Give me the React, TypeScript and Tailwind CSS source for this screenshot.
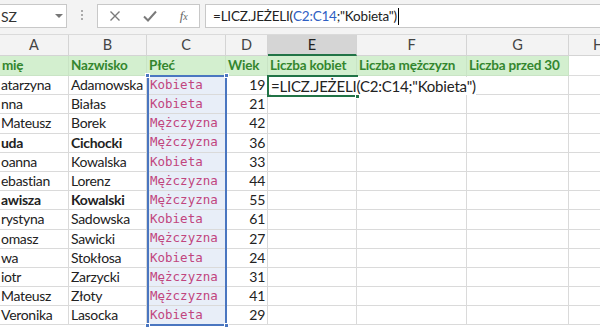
import React from "react";

const cols = [
  { w: 69 },
  { w: 78 },
  { w: 79 },
  { w: 42 },
  { w: 89 },
  { w: 110 },
  { w: 102 },
  { w: 60 },
];

const data: [string, string, string, number, boolean][] = [
  ["atarzyna", "Adamowska", "Kobieta", 19, false],
  ["nna", "Białas", "Kobieta", 21, false],
  ["Mateusz", "Borek", "Mężczyzna", 42, false],
  ["uda", "Cichocki", "Mężczyzna", 36, true],
  ["oanna", "Kowalska", "Kobieta", 33, false],
  ["ebastian", "Lorenz", "Mężczyzna", 44, false],
  ["awisza", "Kowalski", "Mężczyzna", 55, true],
  ["rystyna", "Sadowska", "Kobieta", 61, false],
  ["omasz", "Sawicki", "Mężczyzna", 27, false],
  ["wa", "Stokłosa", "Kobieta", 24, false],
  ["iotr", "Zarzycki", "Mężczyzna", 31, false],
  ["Mateusz", "Złoty", "Mężczyzna", 41, false],
  ["Veronika", "Lasocka", "Kobieta", 29, false],
];

const font = { fontFamily: "Lato, 'Open Sans', sans-serif" };

export default function App() {
  const letters = ["A", "B", "C", "D", "E", "F", "G", "H"];
  const headers = ["mię", "Nazwisko", "Płeć", "Wiek", "Liczba kobiet", "Liczba mężczyzn", "Liczba przed 30", ""];
  return (
    <div className="relative w-[600px] h-[330px] overflow-hidden bg-white text-[#222]" style={font}>
      {/* formula bar */}
      <div className="flex h-[35px] w-[600px] items-start bg-[#f3f3f3] pt-[4px] border-b border-[#dadada]">
        <div className="relative flex h-[24px] w-[67px] shrink-0 items-center border border-l-0 border-[#c8c8c8] bg-white text-[14px] text-[#333]">
          <span className="pl-[1px]">SZ</span>
          <span className="absolute left-[55px] top-[9px] h-0 w-0 border-x-[4px] border-t-[4px] border-x-transparent border-t-[#777]"></span>
        </div>
        <div className="flex w-[30px] shrink-0 flex-col items-center gap-[2px] pt-[6px]">
          <span className="h-[2px] w-[2px] bg-[#aaa]"></span>
          <span className="h-[2px] w-[2px] bg-[#aaa]"></span>
          <span className="h-[2px] w-[2px] bg-[#aaa]"></span>
        </div>
        <div className="flex h-[24px] w-[103px] shrink-0 items-center justify-around border border-[#c8c8c8] bg-white text-[#777]">
          <svg width="12" height="12" viewBox="0 0 12 12">
            <path d="M1.5 1.5 L10.5 10.5 M10.5 1.5 L1.5 10.5" stroke="#7a7a7a" strokeWidth="1.4" />
          </svg>
          <svg width="14" height="12" viewBox="0 0 14 12">
            <path d="M1 6.5 L5 10.5 L13 1.5" stroke="#7a7a7a" strokeWidth="2" fill="none" />
          </svg>
          <span className="text-[13px] italic text-[#666]" style={{ fontFamily: "'Liberation Serif', serif" }}>
            f<span className="text-[10px]">x</span>
          </span>
        </div>
        <div className="ml-[5px] flex h-[24px] flex-1 items-center border border-r-0 border-[#c8c8c8] bg-white pl-[7px] text-[13.5px] tracking-[-0.2px] text-[#222]">
          <span>=LICZ.JEŻELI(</span>
          <span className="text-[#2f5fc4]">C2:C14</span>
          <span>;"Kobieta")</span>
          <span className="ml-[1px] h-[17px] w-[1px] bg-black"></span>
        </div>
      </div>
      {/* column headers */}
      <div className="flex h-[21px] w-[629px] bg-[#f3f3f3] text-[14.5px] text-[#444]">
        {letters.map((l, i) => (
          <div
            key={l}
            className={
              "flex shrink-0 items-center justify-center border-r border-[#d4d4d4] " +
              (l === "E" ? "bg-[#d5d5d5] border-b-2 border-b-[#217346] text-[#222]" : "border-b border-b-[#d4d4d4]")
            }
            style={{ width: cols[i].w }}
          >
            {l}
          </div>
        ))}
      </div>
      {/* header row */}
      <div className="flex h-[20px] w-[629px] text-[13.5px] font-bold tracking-[-0.2px] text-[#33862e]">
        {headers.map((h, i) => (
          <div
            key={i}
            className={
              "flex shrink-0 items-center overflow-visible whitespace-nowrap border-b border-r border-[#c9e4c5] px-[2px] " +
              (i < 7 ? "bg-[#d3efcf]" : "border-[#dcdcdc] bg-white")
            }
            style={{ width: cols[i].w }}
          >
            {h}
          </div>
        ))}
      </div>
      {/* data rows */}
      {data.map((r, ri) => (
        <div key={ri} className="flex h-[19.2px] w-[629px] text-[14px] tracking-[-0.3px] leading-none">
          {cols.map((c, ci) => {
            let content: React.ReactNode = null;
            let cls = "";
            if (ci === 0) {
              content = r[0];
              cls = r[4] ? "font-bold pl-[1px]" : "pl-[1px]";
            } else if (ci === 1) {
              content = r[1];
              cls = r[4] ? "font-bold" : "";
            } else if (ci === 2) {
              content = (
                <span className="text-[12.5px] tracking-normal text-[#c1457e]" style={{ fontFamily: "'DejaVu Sans Mono', monospace" }}>
                  {r[2]}
                </span>
              );
              cls = "bg-[#e8eef8] pl-[3px]";
            } else if (ci === 3) {
              content = r[3];
              cls = "justify-end";
            }
            return (
              <div
                key={ci}
                className={"flex shrink-0 items-center overflow-hidden whitespace-nowrap border-b border-r border-[#dadada] px-[2px] " + cls}
                style={{ width: c.w }}
              >
                {content}
              </div>
            );
          })}
        </div>
      ))}
      {/* C selection */}
      <div className="absolute left-[147px] top-[75px] h-[251px] w-[80px] border-2 border-[#4a76c0]"></div>
      <div className="absolute left-[145px] top-[73px] h-[5px] w-[5px] bg-[#4a76c0] border border-white"></div>
      <div className="absolute left-[224px] top-[73px] h-[5px] w-[5px] bg-[#4a76c0] border border-white"></div>
      <div className="absolute left-[145px] top-[323px] h-[5px] w-[5px] bg-[#4a76c0] border border-white"></div>
      <div className="absolute left-[224px] top-[323px] h-[5px] w-[5px] bg-[#4a76c0] border border-white"></div>
      {/* active cell E2 */}
      <div className="absolute left-[271px] top-[77px] whitespace-nowrap bg-white text-[15px] leading-[18px] tracking-[-0.2px] text-[#222]">
        =LICZ.JEŻELI(C2:C14;"Kobieta")
      </div>
      <div className="absolute left-[267px] top-[75px] h-[22px] w-[2px] bg-[#217346]"></div>
      <div className="absolute left-[267px] top-[75px] h-[2px] w-[91px] bg-[#217346]"></div>
      <div className="absolute left-[267px] top-[95px] h-[2px] w-[91px] bg-[#217346]"></div>
      <div className="absolute left-[355px] top-[94px] h-[5px] w-[5px] bg-[#217346] border border-white"></div>
    </div>
  );
}
